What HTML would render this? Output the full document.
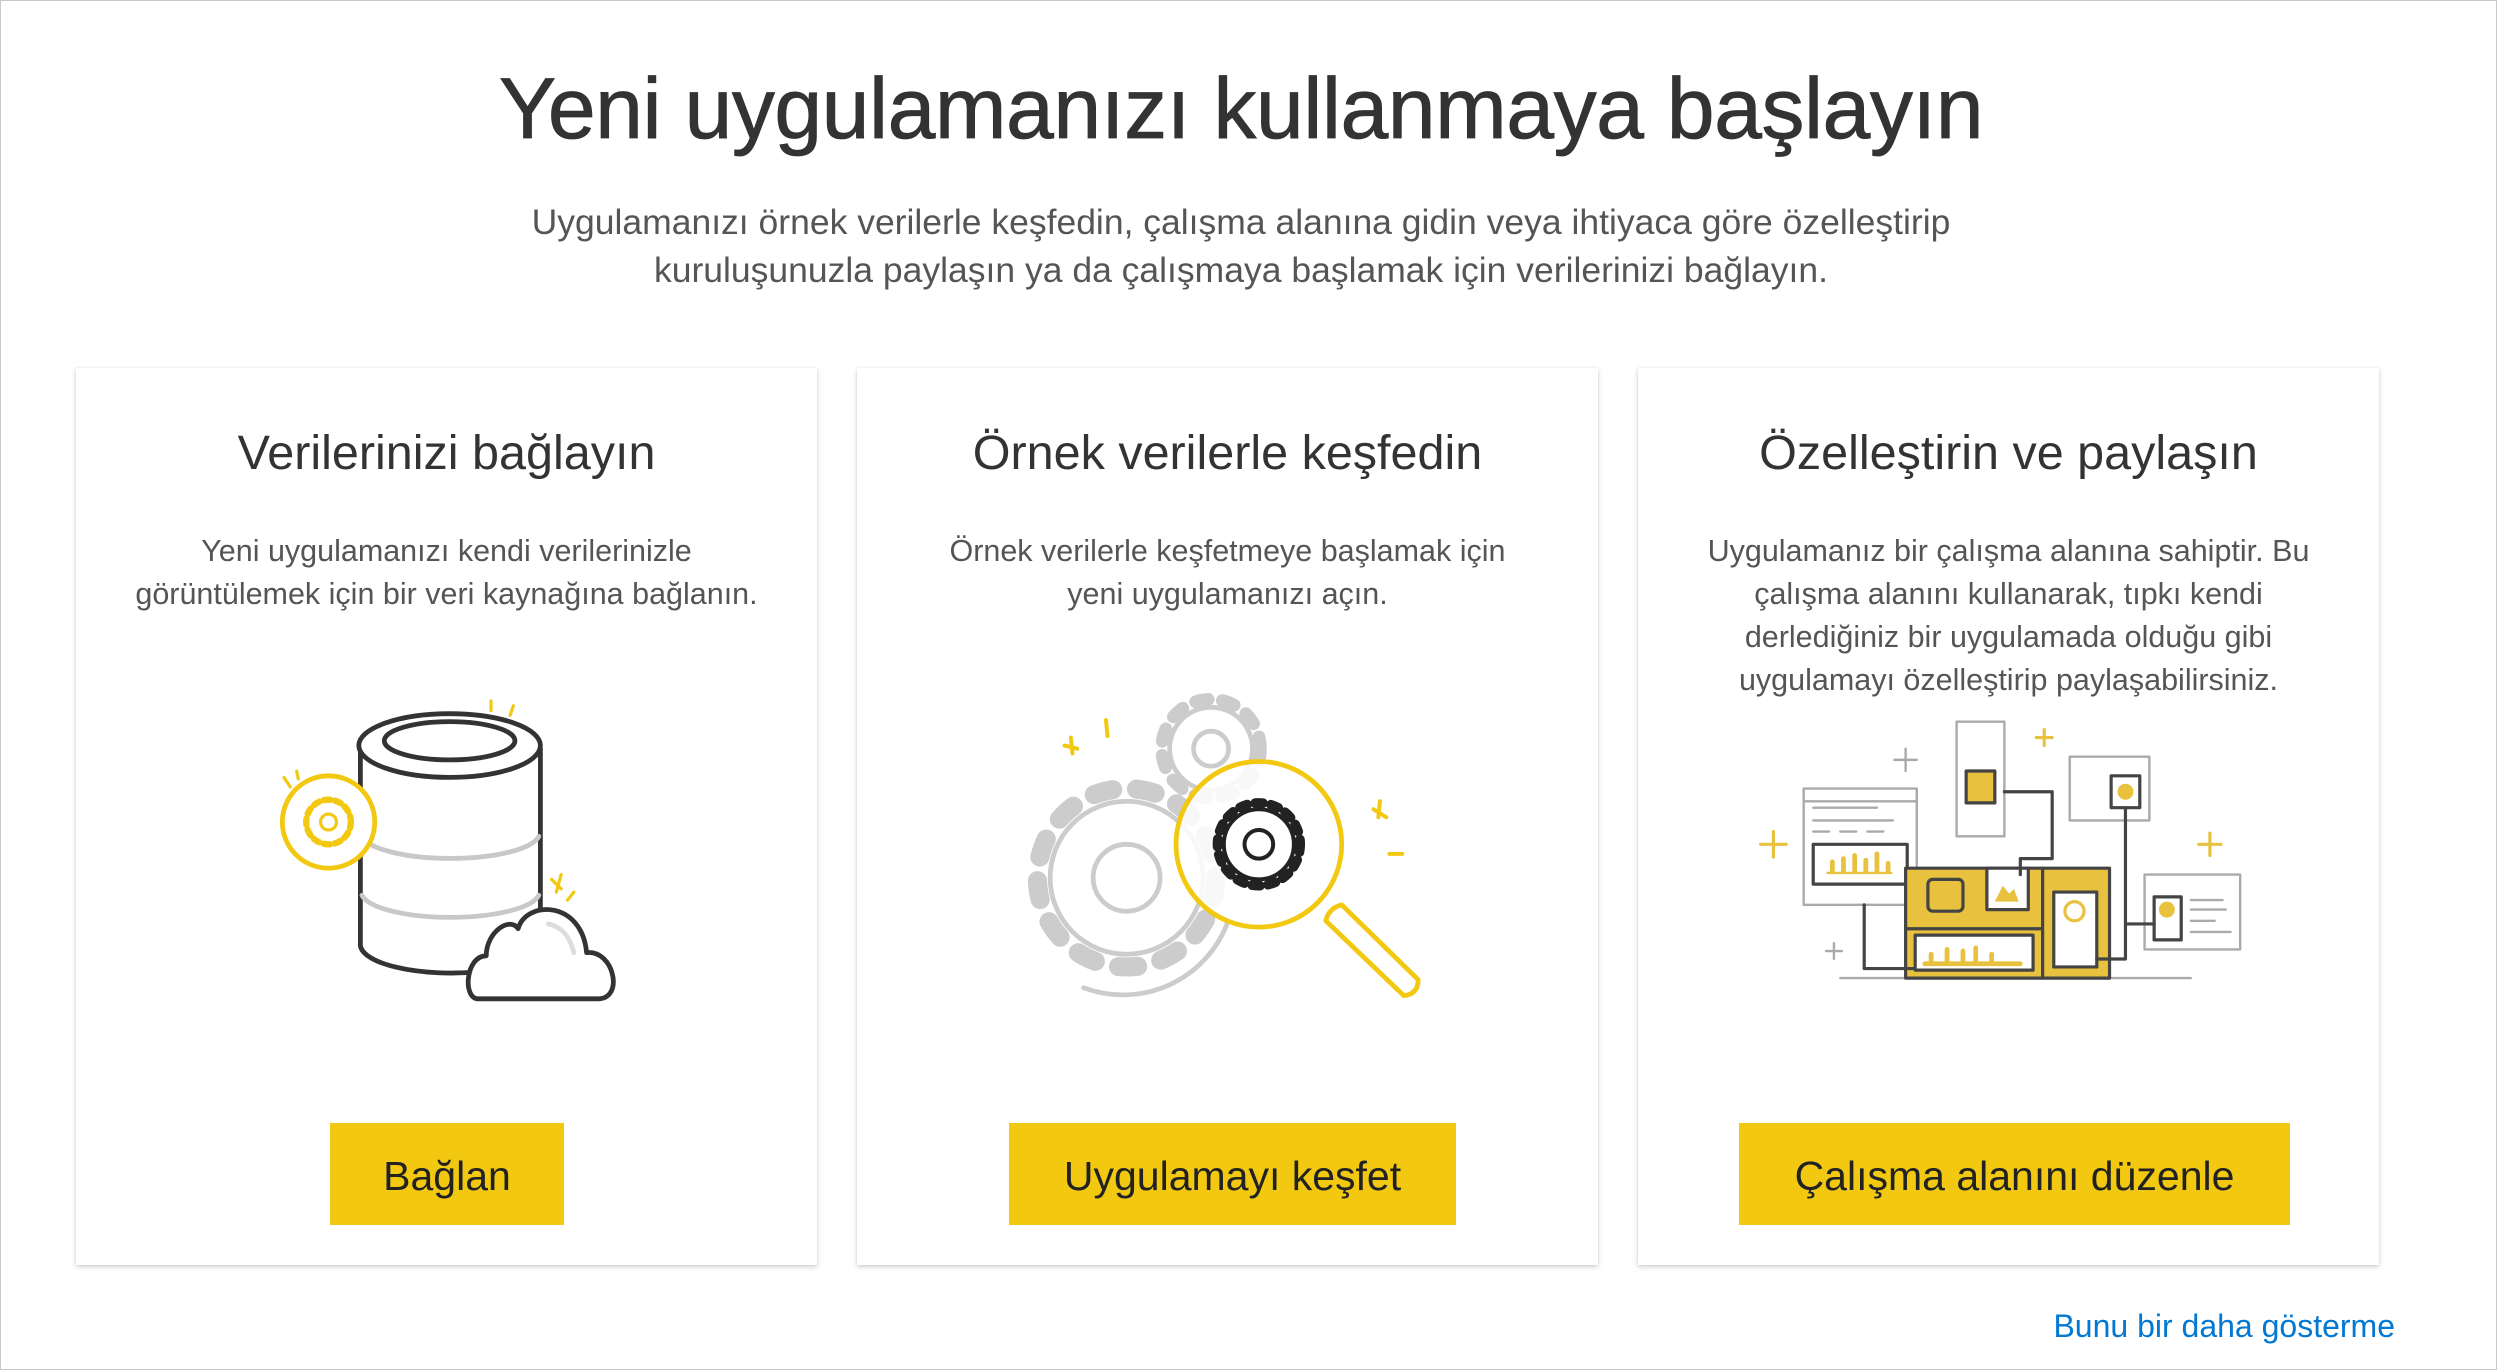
<!DOCTYPE html>
<html><head><meta charset="utf-8"><style>
html,body{margin:0;padding:0}
body{width:2497px;height:1370px;position:relative;background:#fff;font-family:"Liberation Sans",sans-serif;overflow:hidden}
.frame{position:absolute;left:0;top:0;width:2495px;height:1368px;border:1px solid #c8c8c8}
.t{position:absolute;left:0;width:2497px;text-align:center;color:#333}
h1{position:absolute;left:0;width:2482px;top:60px;margin:0;text-align:center;font-size:86px;font-weight:normal;color:#333;letter-spacing:-0.5px;-webkit-text-stroke:0.8px #333}
.sub{top:198px;font-size:35.5px;line-height:48px;color:#555;width:2482px}
.card{position:absolute;top:368px;width:741px;height:897px;background:#fff;box-shadow:0 2px 5px rgba(0,0,0,.18),0 0 2px rgba(0,0,0,.08)}
.card h2{position:absolute;margin:0;width:100%;text-align:center;font-size:48.5px;font-weight:normal;color:#333}
.card p{position:absolute;margin:0;width:100%;text-align:center;font-size:30.5px;line-height:43px;color:#555}
.btn{position:absolute;top:1123px;height:102px;background:#f2c811;color:#222;font-size:41px;line-height:106px;text-align:center}
.link{position:absolute;right:102px;top:1308px;font-size:32px;color:#0078d4}
</style></head><body>
<div class="frame"></div>
<h1>Yeni uygulamanızı kullanmaya başlayın</h1>
<div class="t sub">Uygulamanızı örnek verilerle keşfedin, çalışma alanına gidin veya ihtiyaca göre özelleştirip<br>kuruluşunuzla paylaşın ya da çalışmaya başlamak için verilerinizi bağlayın.</div>

<div class="card" style="left:76px"><h2 style="top:57px">Verilerinizi bağlayın</h2><p style="top:162px">Yeni uygulamanızı kendi verilerinizle<br>görüntülemek için bir veri kaynağına bağlanın.</p></div>
<div class="card" style="left:857px"><h2 style="top:57px">Örnek verilerle keşfedin</h2><p style="top:162px">Örnek verilerle keşfetmeye başlamak için<br>yeni uygulamanızı açın.</p></div>
<div class="card" style="left:1638px"><h2 style="top:57px">Özelleştirin ve paylaşın</h2><p style="top:162px">Uygulamanız bir çalışma alanına sahiptir. Bu<br>çalışma alanını kullanarak, tıpkı kendi<br>derlediğiniz bir uygulamada olduğu gibi<br>uygulamayı özelleştirip paylaşabilirsiniz.</p></div>

<div class="btn" style="left:330px;width:234px">Bağlan</div>
<div class="btn" style="left:1009px;width:447px">Uygulamayı keşfet</div>
<div class="btn" style="left:1739px;width:551px">Çalışma alanını düzenle</div>
<div class="link">Bunu bir daha gösterme</div>

<svg style="position:absolute;left:0;top:0" width="2497" height="1370" viewBox="0 0 1567 860" fill="none" stroke-linecap="round" stroke-linejoin="round">
<g stroke-width="3">
<path d="M226 470 V592 A57 18 0 0 0 300 610" stroke="#333"/>
<path d="M339 470 V580" stroke="#333"/>
<path d="M227 525 A56 16 0 0 0 338 525" stroke="#c8c8c8"/>
<path d="M227 562 A56 16 0 0 0 338 562" stroke="#c8c8c8"/>
<ellipse cx="282" cy="468" rx="57" ry="20" stroke="#333" fill="#fff"/>
<ellipse cx="282" cy="465" rx="41" ry="12" stroke="#333"/>
<circle cx="206" cy="516" r="29" stroke="#f2c811" fill="#fff"/>
<circle cx="206" cy="516" r="14" stroke="#f2c811" stroke-width="4" stroke-dasharray="4 3"/>
<circle cx="206" cy="516" r="5" stroke="#f2c811" stroke-width="2"/>
<path d="M300 627 C290 627 292 600 305 600 C305 585 320 575 325 583 C330 565 365 565 368 598 C385 596 392 627 375 627 Z" stroke="#333" fill="#fff"/>
<path d="M344 580 C354 582 358 590 360 598" stroke="#ddd"/>
<path d="M346 552 l6 6 M352 549 l-3 11 M360 560 l-4 5 M308 440 v6 M322 443 l-2 6 M178 488 l4 6 M186 484 l1 5" stroke="#f2c811" stroke-width="2"/>
</g>
<g stroke-width="3">
<circle cx="707" cy="551" r="48" stroke="#ccc" stroke-width="3"/>
<circle cx="707" cy="551" r="56" stroke="#ccc" stroke-width="12" stroke-dasharray="12 15"/>
<circle cx="707" cy="551" r="21" stroke="#ccc"/>
<path d="M680 620 A70 70 0 0 0 770 580" stroke="#ccc"/>
<circle cx="760" cy="470" r="26" stroke="#ccc"/>
<circle cx="760" cy="470" r="31" stroke="#ccc" stroke-width="8" stroke-dasharray="8 9"/>
<circle cx="760" cy="470" r="11" stroke="#ccc"/>
<circle cx="790" cy="530" r="52" stroke="#f2c811" fill="#fff" fill-opacity="0.85"/>
<circle cx="790" cy="530" r="22" stroke="#222" stroke-width="2.5"/>
<circle cx="790" cy="530" r="26" stroke="#222" stroke-width="6" stroke-dasharray="5 5"/>
<circle cx="790" cy="530" r="9" stroke="#222" stroke-width="2.5"/>
<path d="M832 578 L881 625 M842 568 L890 615 M832 578 Q834 570 842 568 M881 625 Q890 624 890 615" stroke="#f2c811"/>
<path d="M668 468 l8 2 M672 463 l1 10 M862 508 l8 5 M866 503 l-1 10 M872 536 h8 M694 452 l1 10" stroke="#f2c811" stroke-width="2.5"/>
</g>
<g stroke-width="1.5">
<line x1="1155" y1="614" x2="1375" y2="614" stroke="#aaa"/>
<rect x="1132" y="495" width="71" height="73" stroke="#aaa" fill="#fff"/><line x1="1132" y1="503" x2="1203" y2="503" stroke="#aaa"/>
<rect x="1138" y="530" width="59" height="25" stroke="#444" stroke-width="2"/>
<path d="M1147 548h40" stroke="#e8c13f"/><path d="M1150 547v-6M1157 547v-8M1164 547v-10M1171 547v-7M1178 547v-11M1185 547v-5" stroke="#e8c13f" stroke-width="3"/>
<path d="M1138 507h40M1138 515h50M1138 522h10M1155 522h10M1172 522h10" stroke="#aaa"/>
<rect x="1228" y="453" width="30" height="72" stroke="#aaa" fill="#fff"/>
<rect x="1234" y="484" width="18" height="20" stroke="#444" stroke-width="2" fill="#e8c13f"/>
<rect x="1299" y="475" width="50" height="40" stroke="#aaa" fill="#fff"/>
<rect x="1325" y="487" width="18" height="20" stroke="#444" stroke-width="2"/><circle cx="1334" cy="497" r="5" fill="#e8c13f"/>
<rect x="1346" y="549" width="60" height="47" stroke="#aaa" fill="#fff"/>
<rect x="1352" y="563" width="17" height="27" stroke="#444" stroke-width="2"/><circle cx="1360" cy="571" r="5" fill="#e8c13f"/>
<path d="M1375 565h20M1375 571h22M1375 578h15M1375 585h25" stroke="#aaa"/>
<rect x="1196" y="545" width="128" height="69" fill="#e8c13f" stroke="#444" stroke-width="2"/>
<path d="M1196 583h86M1282 545v69" stroke="#444" stroke-width="2"/>
<rect x="1202" y="587" width="74" height="22" stroke="#444" stroke-width="2" fill="#fff"/>
<path d="M1208 605h60M1212 604v-5M1222 604v-8M1232 604v-7M1240 604v-9M1250 604v-5" stroke="#e8c13f" stroke-width="3"/>
<rect x="1247" y="545" width="26" height="26" stroke="#444" stroke-width="2" fill="#fff"/><path d="M1252 566l5-10 4 5 3-3 3 8z" fill="#e8c13f" stroke="none"/>
<rect x="1210" y="552" width="22" height="20" rx="3" stroke="#444" stroke-width="2"/>
<rect x="1289" y="560" width="27" height="47" stroke="#444" stroke-width="2" fill="#fff"/><circle cx="1302" cy="572" r="6" stroke="#e8c13f" stroke-width="2"/>
<path d="M1170 568v40h32M1258 497h30v42h-20v10M1334 507v95h-18M1334 580h18" stroke="#444" stroke-width="2"/>
<path d="M1113 522v16M1105 530h16M1387 523v14M1380 530h14M1283 458v10M1278 463h10" stroke="#e8c13f" stroke-width="2"/>
<path d="M1196 470v14M1189 477h14M1151 592v10M1146 597h10" stroke="#aaa"/>
</g>
</svg>
</body></html>
